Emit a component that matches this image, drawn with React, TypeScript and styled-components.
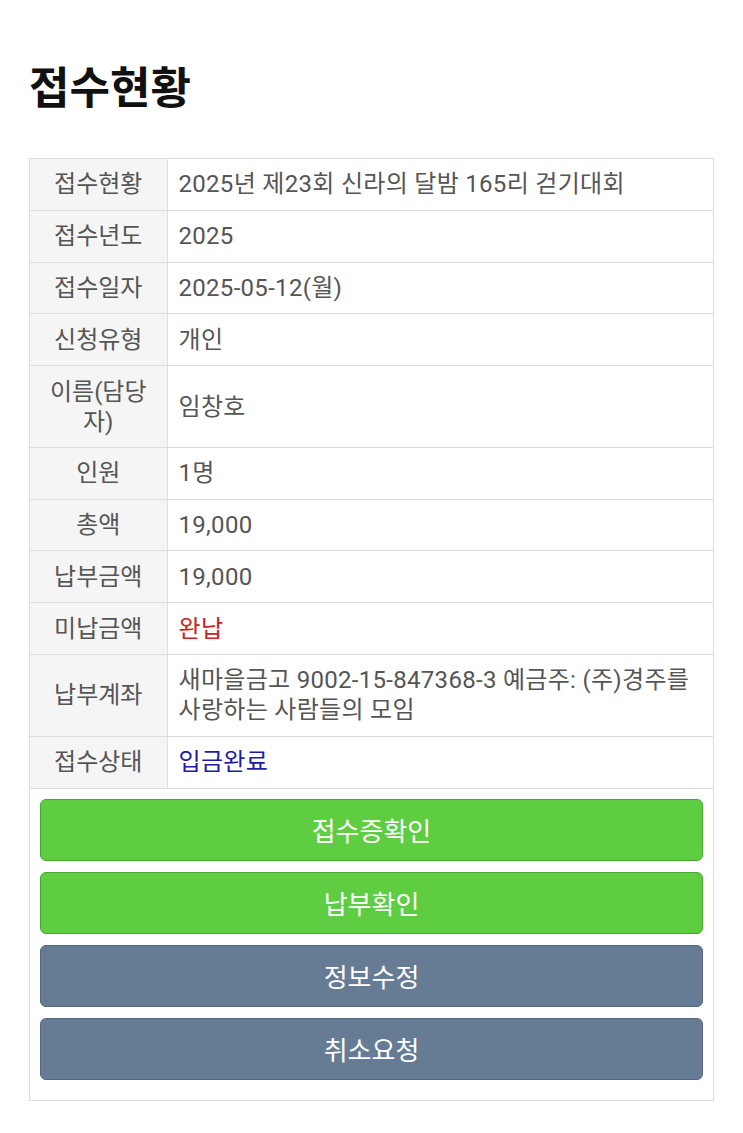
import styled, { createGlobalStyle } from "styled-components";

const GlobalStyle = createGlobalStyle`
  body {
    margin: 0;
    background: #ffffff;
    font-family: Roboto, "Noto Sans CJK KR", sans-serif;
  }
`;

const Page = styled.div`
  padding: 58px 29px 30px 29px;
  width: 685px;
`;

const Title = styled.h1`
  margin: 0 0 46px 0;
  font-family: "Noto Sans CJK KR", sans-serif;
  font-size: 44px;
  font-weight: 700;
  line-height: 54px;
  color: #111;
`;

const Box = styled.div`
  border: 1px solid #dddddd;
`;

const Table = styled.table`
  width: 100%;
  border-collapse: collapse;
  table-layout: fixed;
`;

const Label = styled.th`
  width: 137px;
  background: #f5f5f5;
  border-bottom: 1px solid #dddddd;
  border-right: 1px solid #dddddd;
  padding: 10.4px 8px;
  font-size: 24px;
  font-weight: 400;
  line-height: 30px;
  color: #555;
  text-align: center;
  box-sizing: border-box;
`;

const Value = styled.td<{ $tone?: "red" | "blue" }>`
  border-bottom: 1px solid #dddddd;
  padding: 10.4px 8px 10.4px 11px;
  font-size: 24px;
  line-height: 30px;
  letter-spacing: 0.3px;
  word-break: keep-all;
  color: ${(p) =>
    p.$tone === "red" ? "#cc2222" : p.$tone === "blue" ? "#1c1ca6" : "#555"};
`;

const Actions = styled.div`
  display: flex;
  flex-direction: column;
  gap: 11px;
  padding: 10px 10px 20px 10px;
`;

const Button = styled.button<{ $kind: "green" | "gray" }>`
  height: 62px;
  border-radius: 6px;
  border: 1px solid ${(p) => (p.$kind === "green" ? "#47a634" : "#55667c")};
  background: ${(p) => (p.$kind === "green" ? "#5fcd42" : "#667b94")};
  color: #ffffff;
  font-family: "Noto Sans CJK KR", sans-serif;
  font-size: 26px;
  cursor: pointer;
`;

const rows: { label: string; value: string; tone?: "red" | "blue" }[] = [
  { label: "접수현황", value: "2025년 제23회 신라의 달밤 165리 걷기대회" },
  { label: "접수년도", value: "2025" },
  { label: "접수일자", value: "2025-05-12(월)" },
  { label: "신청유형", value: "개인" },
  { label: "이름(담당자)", value: "임창호" },
  { label: "인원", value: "1명" },
  { label: "총액", value: "19,000" },
  { label: "납부금액", value: "19,000" },
  { label: "미납금액", value: "완납", tone: "red" },
  { label: "납부계좌", value: "새마을금고 9002-15-847368-3 예금주: (주)경주를 사랑하는 사람들의 모임" },
  { label: "접수상태", value: "입금완료", tone: "blue" },
];

export default function App() {
  return (
    <>
      <GlobalStyle />
      <Page>
        <Title>접수현황</Title>
        <Box>
          <Table>
            <tbody>
              {rows.map((r) => (
                <tr key={r.label}>
                  <Label>{r.label}</Label>
                  <Value $tone={r.tone}>{r.value}</Value>
                </tr>
              ))}
            </tbody>
          </Table>
          <Actions>
            <Button $kind="green">접수증확인</Button>
            <Button $kind="green">납부확인</Button>
            <Button $kind="gray">정보수정</Button>
            <Button $kind="gray">취소요청</Button>
          </Actions>
        </Box>
      </Page>
    </>
  );
}
